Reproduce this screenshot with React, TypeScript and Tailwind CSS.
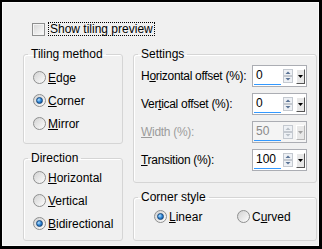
import type { ReactNode } from "react";

function Radio({ checked }: { checked?: boolean }) {
  return (
    <span className="flex h-[13px] w-[13px] shrink-0 items-center justify-center rounded-full border border-[#8e8f8f] bg-[linear-gradient(135deg,#d2d2d2,#fdfdfd)]">
      {checked && (
        <span className="h-[7px] w-[7px] rounded-full border border-[#17467a] bg-[radial-gradient(circle_at_35%_35%,#b6e2ff,#2b84d6_50%,#0d4a8a)]" />
      )}
    </span>
  );
}

function RadioRow({ checked, children }: { checked?: boolean; children: ReactNode }) {
  return (
    <label className="flex h-[23px] items-center gap-[2px]">
      <Radio checked={checked} />
      <span>{children}</span>
    </label>
  );
}

function Group({ title, className, children }: { title: string; className: string; children: ReactNode }) {
  return (
    <fieldset className={`rounded-[3px] border border-[#d5d5d5] shadow-[inset_1px_1px_0_#fff] ${className}`}>
      <legend className="ml-[4px] px-[3px] leading-[14px]">{title}</legend>
      {children}
    </fieldset>
  );
}

function SpinBox({ value, disabled }: { value: string; disabled?: boolean }) {
  const arrow = disabled ? "#b9c0c8" : "#5a7396";
  return (
    <div className={`flex h-[22px] w-[55px] shrink-0 items-center border border-[#abadb3] ${disabled ? "bg-[#f4f4f4]" : "bg-white"}`}>
      <div className="flex h-full w-[28px] flex-col">
        <span className={`flex flex-1 items-center pl-[3px] ${disabled ? "text-[#8a8a8a]" : "text-black"}`}>{value}</span>
        <span className="mb-[1px] ml-[1px] h-[3px] bg-[#3399ff]" />
      </div>
      <svg width="10" height="14" viewBox="0 0 10 14" className="ml-[2px]">
        <rect x="0.5" y="0.5" width="9" height="6" fill="#eef1f5" stroke="#c4c9d0" />
        <rect x="0.5" y="7.5" width="9" height="6" fill="#eef1f5" stroke="#c4c9d0" />
        <path d="M2.5 5 L5 2.5 L7.5 5 Z" fill={arrow} />
        <path d="M2.5 9 L5 11.5 L7.5 9 Z" fill={arrow} />
      </svg>
      <div
        className={`ml-[3px] flex h-[15px] w-[9px] items-center justify-center border-t border-l border-t-white border-l-white border-r border-b ${
          disabled ? "border-r-[#b5b5b5] border-b-[#b5b5b5]" : "border-r-[#555] border-b-[#555]"
        } bg-[#e8e8e8]`}
      >
        <svg width="5" height="3" viewBox="0 0 5 3">
          <path d="M0 0 L5 0 L2.5 3 Z" fill={disabled ? "#a0a0a0" : "#000"} />
        </svg>
      </div>
    </div>
  );
}

function SettingRow({ label, value, disabled }: { label: ReactNode; value: string; disabled?: boolean }) {
  return (
    <div className="flex h-[22px] items-center justify-between pr-[9px] pl-[7px]">
      <span className={`whitespace-nowrap tracking-[-0.3px] ${disabled ? "text-[#9c9c9c]" : "text-black"}`}>{label}</span>
      <SpinBox value={value} disabled={disabled} />
    </div>
  );
}

export default function App() {
  return (
    <div className="h-[249px] w-[322px] border-t-2 border-l-2 border-r-[3px] border-b-[3px] border-black bg-[#f0f0f0] font-['Liberation_Sans',Arial,sans-serif] text-[12px] text-black">
      <div className="h-full border border-[#fafafa] pt-[19px] pl-[20px]">
        <div className="ml-[9px] flex h-[14px] items-center gap-[3px]">
          <span className="h-[13px] w-[13px] border border-[#8e8f8f] bg-[linear-gradient(135deg,#d6d6d6,#fbfbfb)] shadow-[inset_0_0_0_1px_#f4f4f4]" />
          <span className="border border-dotted border-black px-[1px] leading-[12px]">Show tiling preview</span>
        </div>

        <div className="mt-[11px] flex gap-[10px]">
          <div className="flex w-[100px] flex-col gap-[7px]">
            <Group title="Tiling method" className="h-[97px]">
              <div className="mt-[5px] pl-[9px]">
                <RadioRow><u>E</u>dge</RadioRow>
                <RadioRow checked><u>C</u>orner</RadioRow>
                <RadioRow><u>M</u>irror</RadioRow>
              </div>
            </Group>
            <Group title="Direction" className="h-[90px]">
              <div className="mt-[1px] pl-[9px]">
                <RadioRow><u>H</u>orizontal</RadioRow>
                <RadioRow><u>V</u>ertical</RadioRow>
                <RadioRow checked><u>B</u>idirectional</RadioRow>
              </div>
            </Group>
          </div>

          <div className="flex w-[184px] flex-col gap-[7px]">
            <Group title="Settings" className="h-[136px]">
              <div className="mt-[4px] flex flex-col gap-[6px]">
                <SettingRow label={<>H<u>o</u>rizontal offset (%):</>} value="0" />
                <SettingRow label={<>Ver<u>t</u>ical offset (%):</>} value="0" />
                <SettingRow label={<><u>W</u>idth (%):</>} value="50" disabled />
                <SettingRow label={<><u>T</u>ransition (%):</>} value="100" />
              </div>
            </Group>
            <Group title="Corner style" className="h-[51px]">
              <div className="mt-[1px] flex pl-[20px]">
                <div className="w-[83px]">
                  <RadioRow checked><u>L</u>inear</RadioRow>
                </div>
                <RadioRow>C<u>u</u>rved</RadioRow>
              </div>
            </Group>
          </div>
        </div>
      </div>
    </div>
  );
}
